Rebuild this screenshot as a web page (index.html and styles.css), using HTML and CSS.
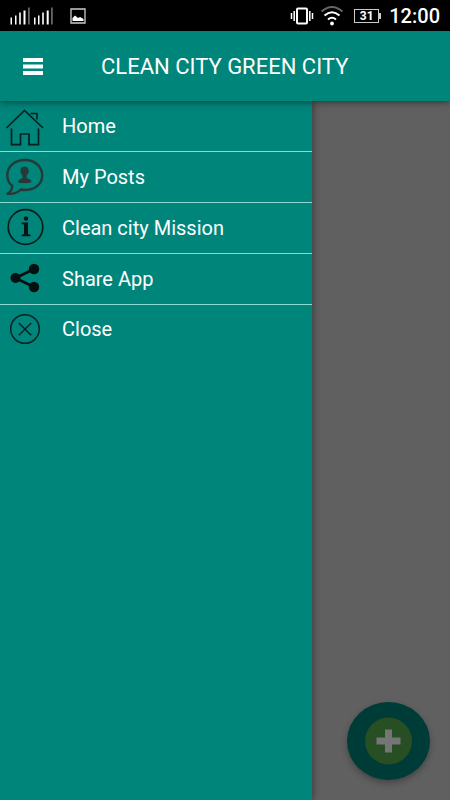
FILE: index.html
```html
<!DOCTYPE html>
<html lang="en">
<head>
<meta charset="utf-8">
<meta name="viewport" content="width=device-width, initial-scale=1">
<title>Clean City Green City</title>
<link rel="stylesheet" href="styles.css">
</head>
<body>
<div class="status">
  <svg class="signal" width="44" height="20" viewBox="0 0 44 20" aria-hidden="true">
    <g fill="#fff"><path d="M.500 11.500h1.500v7H.500zM5 9.500h1.500v9H5zM9.200 6.500h1.600v12H9.200zM13.500 4.500h2v14h-2z"/><path d="M24 11.500h1.500v7H24zM28 9.500h1.500v9H28zM32.200 6.500h1.600v12h-1.600zM36.700 4.500h2v14h-2z"/></g>
    <path fill="#666" d="M18 1.500h1.800v17H18zM41 1.500h1.800v17H41z"/>
  </svg>
  <svg class="photo" width="16" height="16" viewBox="0 0 16 16" aria-hidden="true">
    <path fill="none" stroke="#ccc" stroke-width="1.300" d="M1 1h14v14H1z"/>
    <path fill="#fff" d="M2.500 13V10L5 7.500 8 10l2-1 3.500 2v2z"/>
  </svg>
  <span class="spacer"></span>
  <svg class="vibrate" width="24" height="20" viewBox="0 0 24 20" fill="none" stroke="#fff" aria-hidden="true">
    <rect x="7" y="2.500" width="10" height="15" rx="1" stroke-width="2"/>
    <path stroke-width="1.500" d="M4.200 5v10M1.500 7v6M19.800 5v10M22.500 7v6"/>
  </svg>
  <svg class="wifi" width="24" height="22" viewBox="0 0 24 22" fill="none" stroke-width="2" aria-hidden="true">
    <path stroke="#666" d="M1.500 6.500Q12-2.500 22.500 6.500"/>
    <path stroke="#fff" d="M4.500 10.500q7.500-6.500 15 0M8 14.500q4-3.500 8 0"/>
    <circle cx="12" cy="18.500" r="1.900" fill="#fff"/>
  </svg>
  <span class="battery">31</span>
  <time>12:00</time>
</div>
<header class="bar">
  <button class="menu" type="button" aria-label="Menu">
    <svg width="20" height="18" viewBox="0 0 20 18" fill="#fff" aria-hidden="true"><path d="M0 0h20v4H0zM0 6.500h20v4H0zM0 13h20v4H0z"/></svg>
  </button>
  <h1>CLEAN CITY GREEN CITY</h1>
</header>
<main class="content">
  <nav class="drawer">
    <a href="#home">
      <svg width="50" height="50" viewBox="0 0 50 50" fill="none" stroke="#06201f" stroke-width="1.700" aria-hidden="true"><path d="M6.500 27 24.500 9.500 43 27M30.500 12.500H37V18.500M11.500 27.500v16.200h9V33h8.500v10.700h9.500V27.500"/></svg>
      Home</a>
    <a href="#posts">
      <svg width="50" height="50" viewBox="0 0 50 50" aria-hidden="true"><path fill="none" stroke="#263838" stroke-width="2.400" stroke-linejoin="round" d="M12 33.500C8.500 31 7.300 27 7.300 23 7.300 14.500 14.500 8 25 8s17.200 7 17.200 15.500S35 38 25.500 38c-1.500 0-3 0-4.500-.5-3.500 3.500-8.500 4.800-13.500 4.300C10.500 39.800 12.800 37 12 33.500z"/><path fill="#263838" d="M24.500 14.500c-2.800 0-4.200 1.800-4 4.500.2 2.200 1.100 3.600 2.100 4.500v2.500c-1.400 1-4.400 1-4.400 4.500q6.500 1.600 13.200 0c0-3.500-3.300-3.500-4.700-4.500v-2.500c1-.9 2-2.300 2-4.500 0-2.700-1.500-4.500-4.200-4.500z"/></svg>
      My Posts</a>
    <a href="#mission">
      <svg width="50" height="50" viewBox="0 0 50 50" aria-hidden="true"><circle cx="25.500" cy="24" r="17.300" fill="none" stroke="#081c1c" stroke-width="1.700"/><circle cx="26" cy="15.500" r="2.200" fill="#071616"/><path fill="#071616" d="M21.500 19.500H28V31l2.500.8V33.200h-9v-1.400L24 31V21.500l-2.500-.6z"/></svg>
      Clean city Mission</a>
    <a href="#share">
      <svg width="50" height="50" viewBox="0 0 50 50" fill="#051111" aria-hidden="true"><path fill="none" stroke="#051111" stroke-width="2.800" d="M34 15 15.500 24 34 33"/><circle cx="15.500" cy="24" r="5"/><circle cx="34" cy="15" r="5.200"/><circle cx="34" cy="33" r="5.200"/></svg>
      Share App</a>
    <a href="#close">
      <svg width="50" height="50" viewBox="0 0 50 50" fill="none" stroke="#082424" stroke-width="1.500" aria-hidden="true"><circle cx="25" cy="25" r="14.300"/><path d="m18.800 19 12.400 12.200M31.200 19 18.800 31.200"/></svg>
      Close</a>
  </nav>
  <button class="add" type="button" aria-label="Add post">
    <svg width="48" height="48" viewBox="0 0 48 48" aria-hidden="true"><ellipse cx="23.500" cy="24" rx="23.500" ry="23.500" fill="#274f23"/><path fill="#757575" d="M20 12.500h7v8h8.500v7H27v8h-7v-8h-8.500v-7H20z"/></svg>
  </button>
</main>
</body>
</html>
```
FILE: styles.css
```css
* {
  box-sizing: border-box;
}

body {
  margin: 0;
  min-height: 100vh;
  display: flex;
  flex-direction: column;
  font-family: Roboto, "Liberation Sans", sans-serif;
  color: #fff;
  background: #606060;
}

.status {
  display: flex;
  align-items: center;
  height: 31px;
  padding: 0 10px;
  background: #000;
}

.photo {
  margin-left: 16px;
}

.spacer {
  flex: 1;
}

.wifi {
  margin: 0 10px 0 6px;
}

.battery {
  position: relative;
  width: 25px;
  height: 14px;
  border: 1px solid #ccc;
  font-size: 12px;
  font-weight: 700;
  line-height: 12px;
  text-align: center;
}

.battery::after {
  content: "";
  position: absolute;
  top: 3px;
  right: -3px;
  width: 2px;
  height: 6px;
  background: #ccc;
}

time {
  margin-left: 10px;
  font-size: 20px;
  font-weight: 500;
}

.bar {
  position: relative;
  z-index: 1;
  display: flex;
  align-items: center;
  height: 70px;
  padding-top: 2px;
  background: #00857b;
  box-shadow: 0 1px 7px rgba(0, 0, 0, 0.5);
}

.menu {
  display: flex;
  margin: 0 46px 0 11px;
  padding: 12px;
  border: 0;
  background: none;
}

h1 {
  margin: 0;
  font-size: 22px;
  font-weight: 400;
  line-height: 28px;
}

.content {
  position: relative;
  flex: 1;
  display: flex;
}

.drawer {
  width: 312px;
  background: #00857b;
  box-shadow: 1px 0 7px rgba(0, 0, 0, 0.4);
}

.drawer a {
  display: flex;
  align-items: center;
  gap: 12px;
  height: 51px;
  border-bottom: 1px solid #8edbd4;
  color: #fff;
  font-size: 20px;
  text-decoration: none;
}

.drawer a:last-child {
  height: 48px;
  border-bottom: 0;
}

.add {
  position: absolute;
  right: 20px;
  bottom: 20px;
  display: flex;
  align-items: center;
  justify-content: center;
  width: 83px;
  height: 78px;
  padding: 0;
  border: 0;
  border-radius: 50%;
  background: #003c37;
  box-shadow: 0 3px 6px rgba(0, 0, 0, 0.3);
}
```
